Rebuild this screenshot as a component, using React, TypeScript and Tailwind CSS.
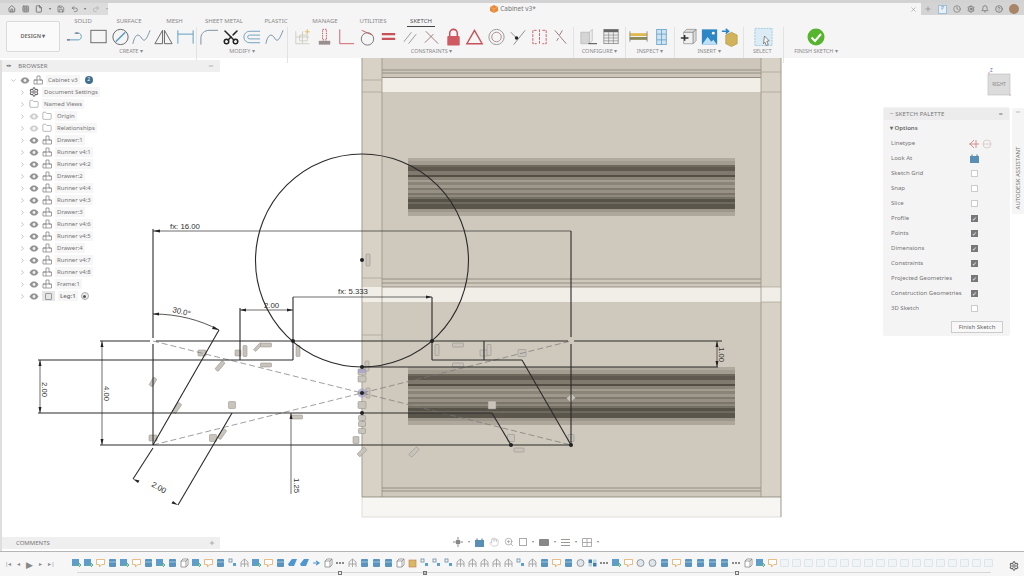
import type { ReactNode } from 'react'
import {
  Bell,
  ChevronRight,
  ChevronDown,
  CircleHelp,
  Clock,
  File,
  Folder,
  Grid3x3,
  Hand,
  Home,
  Minus,
  Plus,
  Redo2,
  Save,
  Scissors,
  Settings,
  Undo2,
  X,
  ZoomIn,
} from 'lucide-react'

const BLUE = '#5d9cc4'
const GRAY = '#777'
const RED = '#c8515a'

// ribbon icons, all drawn in a 22x20 box
const ribbonIcons: Record<string, ReactNode> = {
  line: (
    <>
      <path d="M1 13h12c4 0 4-7 0-7H9" fill="none" stroke={BLUE} strokeWidth="1" />
      <path d="M1 13h3M13 6h-3" stroke={GRAY} strokeWidth="1.2" />
    </>
  ),
  rect: <rect x="3" y="3" width="16" height="13" fill="none" stroke="#666" strokeWidth="1" />,
  circle: (
    <>
      <circle cx="11" cy="10" r="8" fill="none" stroke="#666" strokeWidth="1" />
      <path d="M6 15 16 5" stroke={BLUE} strokeWidth="1.6" />
    </>
  ),
  spline: <path d="M2 17C4 7 8 6 11 11s5 2 9-8" fill="none" stroke="#6d8fa5" strokeWidth="1" />,
  mirror: (
    <>
      <path d="M10 3 2 17h8z" fill="none" stroke="#666" strokeWidth="1" />
      <path d="M12 3v14l8 0z" fill="none" stroke="#666" strokeWidth="1" />
    </>
  ),
  dim: <path d="M3 3v14M19 3v14M3 7h16" fill="none" stroke={BLUE} strokeWidth="1" />,
  fillet: <path d="M2 18V11C2 6 6 3 11 3h9" fill="none" stroke="#7a8f9c" strokeWidth="1" />,
  offset: <path d="M20 4H9a6 6 0 0 0 0 12h11M20 8H9a2 2 0 0 0 0 4h11" fill="none" stroke="#6fa0bd" strokeWidth="1" />,
  project: (
    <>
      <path d="M4 4v13h14M8 8h8v6H8zM4 10h14M11 4v13" fill="none" stroke="#cfcfc4" strokeWidth="1" />
      <path d="M16 2v5M13.5 4.500h5" stroke="#e0c070" strokeWidth="1.2" />
    </>
  ),
  redgear: (
    <>
      <path d="M9 2h4v11H9z" fill="none" stroke={RED} strokeWidth="1" strokeDasharray="1.5 1" />
      <path d="M5 14h12v4H5z" fill="#9a8f8f" />
    </>
  ),
  coincident: <path d="M5 2v15h15" fill="none" stroke={RED} strokeWidth="0.9" />,
  tangent: (
    <>
      <circle cx="11" cy="12" r="6.500" fill="none" stroke="#777" strokeWidth="1" />
      <path d="M5 3l11 5" stroke={RED} strokeWidth="0.9" />
    </>
  ),
  equal: <path d="M4 7h14M4 12h14" stroke={RED} strokeWidth="2.2" />,
  parallel: <path d="M4 15 12 5M9 17l8-10" stroke="#999" strokeWidth="1" />,
  perp: <path d="M5 4 18 17M4 16 13 7" stroke="#a07a7a" strokeWidth="1" />,
  lock: (
    <>
      <path d="M7 9V6a4 4 0 0 1 8 0v3" fill="none" stroke={RED} strokeWidth="1.6" />
      <rect x="4.500" y="9" width="13" height="10" rx="1" fill="#cf5a62" />
    </>
  ),
  triangle: <path d="M11 3 3 17h16z" fill="none" stroke={RED} strokeWidth="1.5" />,
  concentric: (
    <>
      <circle cx="11" cy="10" r="8" fill="none" stroke="#999" strokeWidth="1" />
      <circle cx="11" cy="10" r="5" fill="none" stroke="#b08a8a" strokeWidth="1" />
    </>
  ),
  midpoint: (
    <>
      <path d="M4 5l6 6M19 3 7 18" stroke="#8a8a8a" strokeWidth="1" />
      <circle cx="10" cy="11" r="1.8" fill="#222" />
    </>
  ),
  symmetric: <path d="M8 3H4v14h4M14 3h4v14h-4M11 2v16" fill="none" stroke={RED} strokeWidth="0.9" strokeDasharray="3 1" />,
  fix: <path d="M5 3l12 14M13 3l-3 5M7 14l2-3" fill="none" stroke="#a07a7a" strokeWidth="1" />,
  configure: (
    <>
      <path d="M4 5h9v12H4z" fill="#d5d5d5" stroke="#aaa" strokeWidth="0.6" />
      <path d="M13 5l3-3v12l-3 3z" fill="#ececec" stroke="#aaa" strokeWidth="0.6" />
      <path d="M12 17h9" stroke="#444" strokeWidth="1" />
    </>
  ),
  table: (
    <>
      <rect x="3" y="2" width="15" height="15" fill="#eee" stroke="#777" strokeWidth="0.7" />
      <path d="M3 2h15v3H3z" fill="#666" />
      <path d="M3 8h15M3 11h15M3 14h15M8 5v12M13 5v12" stroke="#777" strokeWidth="0.6" />
    </>
  ),
  measure: (
    <>
      <rect x="2" y="6" width="18" height="3" fill="#e0b84f" />
      <rect x="2" y="10" width="18" height="3" fill="#8c8c5a" />
      <path d="M2 4v11M20 4v11" stroke={GRAY} strokeWidth="0.8" />
    </>
  ),
  interference: (
    <>
      <rect x="6" y="2" width="10" height="16" fill="#cfe4f2" stroke={BLUE} strokeWidth="0.8" />
      <path d="M6 7h10M6 13h10M11 2v16" stroke={BLUE} strokeWidth="0.8" />
    </>
  ),
  insertDerive: (
    <>
      <path d="M7 5h10v12H7z" fill="#f0f0f0" stroke="#888" strokeWidth="0.7" />
      <path d="M7 5l3-3h10l-3 3zM17 5l3-3v12l-3 3z" fill="#ddd" stroke="#888" strokeWidth="0.7" />
      <path d="M4 11h8M8 8v6" stroke="#333" strokeWidth="1.6" />
    </>
  ),
  canvas: (
    <>
      <rect x="3" y="2" width="16" height="16" fill="#2d87c4" />
      <path d="M3 18l6-8 4 5 2-2 4 5z" fill="#bfe0f4" />
      <circle cx="15" cy="6" r="1.500" fill="#fff" />
    </>
  ),
  mcmaster: (
    <>
      <path d="M6 8l6-3 6 3v9l-6 3-6-3z" fill="#d2b35c" stroke="#a88c3e" strokeWidth="0.6" />
      <path d="M2 4h6M6 1.500 9 4 6 6.500" fill="none" stroke="#2a86c8" strokeWidth="1.6" />
    </>
  ),
  select: (
    <>
      <rect x="2" y="1" width="18" height="18" fill="#dcecf5" stroke="#8cc0dc" strokeWidth="0.8" strokeDasharray="2 1" />
      <path d="M12 9l5 5-2.500.5L16 18l-2 1-1.500-3.500L11 17z" fill="#f7f7f7" stroke="#555" strokeWidth="0.7" />
    </>
  ),
}

const ribbonGroups = [
  { label: 'CREATE', width: 'w-[131px]', px: 'px-[0px]', icons: ['line', 'rect', 'circle', 'spline', 'mirror', 'dim'] },
  { label: 'MODIFY', width: 'w-[91px]', px: 'px-[2px]', icons: ['fillet', 'scissors', 'offset', 'spline'] },
  {
    label: 'CONSTRAINTS',
    width: 'w-[286px]',
    px: 'pl-[4px] pr-[2px]',
    icons: ['project', 'redgear', 'coincident', 'tangent', 'equal', 'parallel', 'perp', 'lock', 'triangle', 'concentric', 'midpoint', 'symmetric', 'fix'],
  },
  { label: 'CONFIGURE', width: 'w-[52px]', px: 'px-[3px]', icons: ['configure', 'table'] },
  { label: 'INSPECT', width: 'w-[49px]', px: 'px-[2px]', icons: ['measure', 'interference'] },
  { label: 'INSERT', width: 'w-[69px]', px: 'px-[2px]', icons: ['insertDerive', 'canvas', 'mcmaster'] },
  { label: 'SELECT', width: 'w-[40px]', px: 'px-[9px]', icons: ['select'] },
]

const tabs = [
  { name: 'SOLID', w: 'w-[46px]' },
  { name: 'SURFACE', w: 'w-[46px]' },
  { name: 'MESH', w: 'w-[45px]' },
  { name: 'SHEET METAL', w: 'w-[54px]' },
  { name: 'PLASTIC', w: 'w-[50px]' },
  { name: 'MANAGE', w: 'w-[48px]' },
  { name: 'UTILITIES', w: 'w-[48px]' },
  { name: 'SKETCH', w: 'w-[48px]', active: true },
]

const browserRows = [
  { name: 'Drawer:1' },
  { name: 'Runner v4:1' },
  { name: 'Runner v4:2' },
  { name: 'Drawer:2' },
  { name: 'Runner v4:4' },
  { name: 'Runner v4:3' },
  { name: 'Drawer:3' },
  { name: 'Runner v4:6' },
  { name: 'Runner v4:5' },
  { name: 'Drawer:4' },
  { name: 'Runner v4:7' },
  { name: 'Runner v4:8' },
  { name: 'Frame:1' },
]

const paletteRows = [
  { name: 'Sketch Grid', on: false },
  { name: 'Snap', on: false },
  { name: 'Slice', on: false },
  { name: 'Profile', on: true },
  { name: 'Points', on: true },
  { name: 'Dimensions', on: true },
  { name: 'Constraints', on: true },
  { name: 'Projected Geometries', on: true },
  { name: 'Construction Geometries', on: true },
  { name: '3D Sketch', on: false },
]

// stripes of a drawer handle: top, height, colour
const handleStripes: [number, number, string][] = [
  [0, 3, '#b0a99d'],
  [3, 4, '#a29b8f'],
  [7, 2, '#6d675c'],
  [9, 4, '#5f594f'],
  [13, 4, '#7f796e'],
  [17, 2, '#544e45'],
  [19, 3, '#8a8478'],
  [22, 2, '#a39c90'],
  [24, 3, '#8a8478'],
  [27, 3, '#9f988c'],
  [30, 2, '#7f796e'],
  [32, 3, '#979084'],
  [35, 2, '#7a7469'],
  [37, 2, '#8f897d'],
  [39, 2, '#757064'],
  [41, 3, '#575248'],
  [44, 2, '#6f695e'],
  [46, 5, '#5b564c'],
  [51, 3, '#9d968a'],
  [54, 4, '#aea79b'],
]

// sketch constraint glyphs: x, y, w, h, rotation
const glyphs: [number, number, number, number, number][] = [
  [368, 260, 4, 12, 0],
  [202, 353, 8, 6, 0],
  [238, 353, 6, 6, 0],
  [245, 351, 4, 11, 0],
  [258, 347, 3, 10, 45],
  [266, 345, 11, 4, 0],
  [266, 365, 11, 4, 0],
  [298, 351, 4, 11, 0],
  [153, 382, 4, 9, 30],
  [220, 366, 4, 11, 40],
  [177, 408, 4, 11, 35],
  [222, 434, 4, 11, 35],
  [232, 405, 7, 7, 0],
  [213, 438, 7, 7, 0],
  [153, 438, 8, 6, 0],
  [297, 417, 11, 4, 0],
  [362, 372, 8, 6, 0],
  [362, 379, 8, 6, 0],
  [367, 366, 4, 10, 0],
  [368, 393, 4, 10, 0],
  [362, 405, 8, 7, 0],
  [362, 418, 7, 5, 0],
  [362, 424, 7, 5, 0],
  [362, 431, 7, 5, 0],
  [356, 440, 6, 7, 0],
  [362, 452, 4, 10, 45],
  [414, 452, 4, 11, 45],
  [458, 345, 11, 4, 0],
  [437, 350, 4, 11, 0],
  [484, 353, 8, 6, 0],
  [489, 350, 4, 11, 0],
  [522, 353, 8, 7, 0],
  [458, 365, 11, 4, 0],
  [492, 405, 8, 8, 0],
  [511, 438, 7, 7, 0],
  [519, 450, 10, 4, 0],
  [571, 398, 6, 7, 45],
  [571, 438, 6, 7, 0],
]

const lines: [number, number, number, number][] = [
  [100, 341, 150, 341],
  [156, 341, 568, 341],
  [574, 341, 722, 341],
  [100, 445, 571, 445],
  [38, 360, 293, 360],
  [432, 360, 522, 360],
  [38, 413, 492, 413],
  [362, 367, 718, 367],
  [153, 229, 153, 338],
  [153, 344, 153, 445],
  [571, 231, 571, 337],
  [571, 344, 571, 445],
  [153, 445, 219, 330],
  [232, 413, 178, 505],
  [153, 448, 133, 479],
  [293, 297, 293, 360],
  [432, 297, 432, 360],
  [484, 341, 484, 360],
  [240, 308, 240, 360],
  [522, 360, 571, 445],
  [492, 413, 511, 445],
]

// timeline icon kinds, left to right
const timeline =
  'mmsbmsbmbcmsbjrmsbBBacdrbbbcojjjrrrrrjrbsbgpdmsggbsbbbbdcms'.split('')
const fadedCount = 18

function Eye({ faded }: { faded?: boolean }) {
  return (
    <svg width="10" height="7" viewBox="0 0 10 7" className={faded ? 'opacity-30' : 'opacity-70'}>
      <path d="M.5 3.500C2 1 3.500.5 5 .5s3 .5 4.500 3C8 6 6.500 6.500 5 6.500S2 6 .5 3.500z" fill="#666" />
      <circle cx="5" cy="3.500" r="1.400" fill="#eee" />
    </svg>
  )
}

function ComponentIcon() {
  return (
    <svg width="10" height="10" viewBox="0 0 10 10">
      <path d="M1 9V5h3V1h3v4h2.500v4z M1 5h8 M4 5v4" fill="none" stroke="#888" strokeWidth="0.8" />
    </svg>
  )
}

function TreeRow({ indent, chevron = 'right', children }: { indent: string; chevron?: 'right' | 'down'; children: ReactNode }) {
  return (
    <div className={`flex h-[12px] items-center gap-[3px] ${indent}`}>
      {chevron === 'down' ? (
        <ChevronDown size={7} strokeWidth={1.5} className="text-[#777]" />
      ) : (
        <ChevronRight size={7} strokeWidth={1.5} className="text-[#777]" />
      )}
      {children}
    </div>
  )
}

function RowLabel({ children, bold }: { children: ReactNode; bold?: boolean }) {
  return <span className={`bg-[#f6f6f6] px-[2px] text-[6px] leading-[10px] text-[#757575] ${bold ? 'font-semibold' : ''}`}>{children}</span>
}

function BrowserPanel() {
  return (
    <div className="absolute left-[2px] top-[2px] w-[218px]">
      <div className="flex h-[12px] items-center justify-between bg-[#efefef] px-[4px] text-[6px] tracking-wide text-[#777]">
        <span className="flex items-center gap-[6px]">
          <span className="text-[5px]">◂▸</span>
          BROWSER
        </span>
        <Minus size={6} className="mr-[2px]" />
      </div>
      <div className="mt-[2px]">
        <TreeRow indent="pl-[8px]" chevron="down">
          <Eye />
          <ComponentIcon />
          <RowLabel>Cabinet v3</RowLabel>
          <span className="ml-[2px] flex h-[8px] w-[8px] items-center justify-center rounded-full bg-[#3f6f8f] text-[5px] text-white">2</span>
        </TreeRow>
        <TreeRow indent="pl-[17px]">
          <Settings size={10} strokeWidth={2.5} className="text-[#666]" />
          <RowLabel>Document Settings</RowLabel>
        </TreeRow>
        <TreeRow indent="pl-[17px]">
          <Folder size={10} strokeWidth={1.2} className="text-[#777]" />
          <RowLabel>Named Views</RowLabel>
        </TreeRow>
        {['Origin', 'Relationships'].map((name) => (
          <TreeRow key={name} indent="pl-[17px]">
            <Eye faded />
            <Folder size={10} strokeWidth={1.2} className="text-[#777]" />
            <RowLabel>{name}</RowLabel>
          </TreeRow>
        ))}
        {browserRows.map((row) => (
          <TreeRow key={row.name} indent="pl-[17px]">
            <Eye />
            <ComponentIcon />
            <RowLabel>{row.name}</RowLabel>
          </TreeRow>
        ))}
        <TreeRow indent="pl-[17px]">
          <Eye />
          <span className="flex h-[10px] w-[13px] items-center justify-center bg-[#e6e6e6]">
            <span className="h-[7px] w-[7px] rounded-[1px] border border-[#999]" />
          </span>
          <RowLabel bold>Leg:1</RowLabel>
          <span className="flex h-[8px] w-[8px] items-center justify-center rounded-full border border-[#aaa] bg-[#eee]">
            <span className="h-[3px] w-[3px] rounded-full bg-[#555]" />
          </span>
        </TreeRow>
      </div>
    </div>
  )
}

function SketchPalette() {
  return (
    <div className="absolute right-[15px] top-[50px] w-[125px] bg-[#f4f4f4] pb-[2px] shadow-[0_0_1px_#bbb]">
      <div className="flex h-[12px] items-center justify-between bg-[#ececec] px-[6px] text-[6px] tracking-wide text-[#777]">
        <span>− SKETCH PALETTE</span>
        <span className="text-[7px]">=</span>
      </div>
      <div className="flex h-[16px] items-center pl-[6px] text-[6px] font-semibold text-[#666]">▾ Options</div>
      <div className="text-[6px] text-[#757575]">
        <div className="flex h-[15px] items-center justify-between pl-[7px] pr-[17px]">
          <span>Linetype</span>
          <svg width="24" height="10" viewBox="0 0 24 10">
            <path d="M1 5h10M6 1 2 5l4 4M8 1v8" fill="none" stroke="#cf7a7a" strokeWidth="0.8" />
            <circle cx="19" cy="5" r="4" fill="none" stroke="#d8c4c4" strokeWidth="0.8" />
            <path d="M15 5h8" stroke="#d8c4c4" strokeWidth="0.8" />
          </svg>
        </div>
        <div className="flex h-[15px] items-center justify-between pl-[7px] pr-[30px]">
          <span>Look At</span>
          <svg width="9" height="9" viewBox="0 0 9 9">
            <rect y="2" width="9" height="7" fill="#5a8fb5" />
            <path d="M2 2V.5M7 2V.5" stroke="#3f6f8f" />
          </svg>
        </div>
        {paletteRows.map((row) => (
          <div key={row.name} className="flex h-[15px] items-center justify-between pl-[7px] pr-[31px]">
            <span>{row.name}</span>
            {row.on ? (
              <span className="flex h-[7px] w-[7px] items-center justify-center bg-[#777] text-[6px] leading-none text-white">✓</span>
            ) : (
              <span className="h-[7px] w-[7px] border border-[#ccc] bg-white" />
            )}
          </div>
        ))}
      </div>
      <div className="flex justify-end pr-[6px] pt-[5px]">
        <div className="flex h-[12px] w-[52px] items-center justify-center border border-[#ccc] bg-[#f8f8f8] text-[6px] text-[#666]">Finish Sketch</div>
      </div>
    </div>
  )
}

function Drawing() {
  return (
    <svg className="absolute inset-0" width="1024" height="493" viewBox="0 58 1024 493">
      {/* cabinet seen from the right */}
      <rect x="362" y="58" width="419" height="459" fill="#f8f6f3" stroke="#cfcac2" strokeWidth="0.6" />
      <rect x="362" y="58" width="419" height="439" fill="#d8d1c5" />
      <rect x="382" y="58" width="379" height="20" fill="#cec6ba" />
      <rect x="382" y="78" width="379" height="14" fill="#f1eee8" />
      <path d="M382 70h379M382 73h379M382 77.500h379" stroke="#7d776c" strokeWidth="0.7" />
      <rect x="382" y="92" width="379" height="195" fill="#cfc8bc" />
      <rect x="362" y="287" width="419" height="15" fill="#f1eee8" />
      <path d="M382 279h379M382 283h379M382 287h379" stroke="#7d776c" strokeWidth="0.7" />
      <rect x="382" y="302" width="379" height="195" fill="#cfc8bc" />
      <path d="M382 488h379M382 491h379M362 497h419" stroke="#7d776c" strokeWidth="0.7" />
      <path d="M362 58v439M382 58v439M761 58v439M781 58v459" stroke="#8f897e" strokeWidth="0.7" />
      <path d="M362 80h20M362 92h20M362 278h20M362 335h20M761 72h20M761 92h20M761 287h20M761 302h20" stroke="#a09a8e" strokeWidth="0.6" />
      {[158, 367].map((top) =>
        handleStripes.map(([y, h, color]) => <rect key={`${top}-${y}`} x="408" y={top + y} width="327" height={h} fill={color} />),
      )}

      {/* constraint glyphs */}
      {glyphs.map(([x, y, w, h, r], i) => (
        <rect
          key={i}
          x={x - w / 2}
          y={y - h / 2}
          width={w}
          height={h}
          rx="0.8"
          fill="#c8c4bc"
          stroke="#8f8b83"
          strokeWidth="0.5"
          transform={`rotate(${r} ${x} ${y})`}
        />
      ))}
      <circle cx="362" cy="393" r="4.500" fill="#a49cc8" opacity="0.7" />
      <rect x="358" y="369" width="8" height="4" fill="#a49cc8" opacity="0.7" />

      {/* construction lines */}
      <path d="M153 341 571 445M153 445 571 341" stroke="#777" strokeWidth="0.7" strokeDasharray="6 3" fill="none" />

      {/* sketch lines */}
      <g stroke="#2a2a2a" strokeWidth="1.1" fill="none">
        {lines.map(([x1, y1, x2, y2], i) => (
          <line key={i} x1={x1} y1={y1} x2={x2} y2={y2} />
        ))}
        <circle cx="362" cy="260.500" r="106.500" />
        <path d="M153 314C178 314 200 320 219 330" strokeWidth="0.8" />
      </g>

      {/* dimension lines */}
      <g stroke="#2f2f2f" strokeWidth="0.7" fill="none">
        <path d="M153 231h418M293 297h139M240 310h53M102 341v104M40 360v53M291 413v81M717 341v26" />
      </g>
      <g fill="#222">
        <path d="M153 231l7-1.500v3zM293 297m139 0l-6-1.500v3zM240 310l6-1.500v3zM293 310l-6-1.500v3z" />
        <path d="M102 341l-1.500 6h3zM102 445l-1.500-6h3zM40 360l-1.500 6h3zM40 413l-1.500-6h3zM291 413l-1.500 6h3zM717 341l-1.500 6h3zM717 367l-1.500-6h3z" />
        <path d="M153 314l6-1.500v3zM219 330l-7-1 1.500-3zM133 479l6.500 1.500-1.500 2.600zM178 505l-6.500-1.500 1.500-2.600z" />
        {[
          [293, 341],
          [362, 260],
          [362, 367],
          [362, 393],
          [362, 413],
          [432, 341],
          [511, 445],
          [571, 445],
        ].map(([x, y]) => (
          <circle key={`${x}-${y}`} cx={x} cy={y} r="2" />
        ))}
      </g>
      <g fill="#2f2f2f" fontFamily="'Liberation Sans', sans-serif" fontSize="7.800">
        <text x="170" y="229">fx: 16.00</text>
        <text x="338" y="294">fx: 5.333</text>
        <text x="264" y="308">2.00</text>
        <text x="172" y="312" transform="rotate(14 172 312)">30.0°</text>
        <text x="42" y="382" transform="rotate(90 42 382)">2.00</text>
        <text x="104" y="386" transform="rotate(90 104 386)">4.00</text>
        <text x="294" y="478" transform="rotate(90 294 478)">1.25</text>
        <text x="719" y="347" transform="rotate(90 719 347)">1.00</text>
        <text x="151" y="486" transform="rotate(30 151 486)">2.00</text>
      </g>

      {/* view cube */}
      <g>
        <path d="M989 72v2M1009 95h2" stroke="#c66" strokeWidth="0.6" />
        <rect x="988" y="74" width="22" height="21" fill="#dcdcdc" stroke="#bbb" strokeWidth="0.6" />
        <text x="999" y="86" textAnchor="middle" fontSize="4.500" fill="#888" fontFamily="'Noto Sans', sans-serif">RIGHT</text>
        <text x="990" y="72" fontSize="4.500" fill="#6a6ab0" fontFamily="'Noto Sans', sans-serif">Z</text>
      </g>
    </svg>
  )
}

function NavBar() {
  return (
    <div className="absolute bottom-[3px] left-[453px] flex h-[12px] items-center gap-[5px]">
      <svg width="10" height="10" viewBox="0 0 10 10">
        <circle cx="5" cy="5" r="2.500" fill="#888" />
        <path d="M5 0v2M5 8v2M0 5h2M8 5h2" stroke="#888" />
      </svg>
      <span className="text-[4px] text-[#888]">▾</span>
      <svg width="9" height="9" viewBox="0 0 9 9">
        <rect y="2" width="9" height="7" fill="#5a8fb5" />
        <path d="M2 2V.5M7 2V.5" stroke="#3f6f8f" />
      </svg>
      <Hand size={10} strokeWidth={1.2} className="text-[#aaa]" />
      <ZoomIn size={10} strokeWidth={1.2} className="text-[#777]" />
      <span className="h-[8px] w-[8px] border border-[#aaa]" />
      <span className="text-[4px] text-[#888]">▾</span>
      <span className="h-[7px] w-[10px] rounded-[1px] bg-[#888]" />
      <span className="text-[4px] text-[#888]">▾</span>
      <svg width="9" height="9" viewBox="0 0 9 9">
        <path d="M0 1.500h9M0 4.500h9M0 7.500h9" stroke="#999" />
      </svg>
      <span className="text-[4px] text-[#888]">▾</span>
      <svg width="10" height="9" viewBox="0 0 10 9">
        <path d="M.5.5h9v8h-9zM.5 4.500h9M5 .5v8" fill="none" stroke="#999" strokeWidth="0.8" />
      </svg>
      <span className="text-[4px] text-[#888]">▾</span>
    </div>
  )
}

function TimelineIcon({ kind }: { kind: string }) {
  switch (kind) {
    case 'm':
      return (
        <svg width="9" height="10" viewBox="0 0 9 10">
          <rect y="1" width="7" height="7" fill="#5d9ccc" />
          <path d="M3 7h6M7 5l2 2-2 2" fill="none" stroke="#5cb588" strokeWidth="1" />
        </svg>
      )
    case 's':
      return (
        <svg width="9" height="10" viewBox="0 0 9 10">
          <path d="M.5 1.500h8v5h-3l-2 2.500v-2.500h-3z" fill="#fff" stroke="#e0a050" strokeWidth="0.7" />
        </svg>
      )
    case 'b':
      return (
        <svg width="9" height="10" viewBox="0 0 9 10">
          <rect x="1" y="1" width="7" height="8" rx="1" fill="#5a93bd" />
          <path d="M1 4h7" stroke="#a8d0ea" strokeWidth="0.8" />
        </svg>
      )
    case 'B':
      return (
        <svg width="9" height="10" viewBox="0 0 9 10">
          <path d="M0 6 4 1h5L6 8H1z" fill="#4f97d0" />
        </svg>
      )
    case 'c':
      return (
        <svg width="9" height="10" viewBox="0 0 9 10">
          <path d="M1 3h5v6H1zM1 3l2-2h5v6L6 9M6 3l2-2" fill="#fff" stroke="#888" strokeWidth="0.8" />
        </svg>
      )
    case 'j':
      return (
        <svg width="9" height="10" viewBox="0 0 9 10">
          <rect x="1" y="1" width="3" height="3" fill="none" stroke="#6a8ca8" strokeWidth="0.8" />
          <rect x="5" y="5" width="3" height="3" fill="#5a9fd0" />
        </svg>
      )
    case 'r':
      return (
        <svg width="9" height="10" viewBox="0 0 9 10">
          <path d="M1 9V4l3.500-3L8 4v5M1 6h7M4.500 1v8" fill="none" stroke="#999" strokeWidth="0.8" />
        </svg>
      )
    case 'a':
      return (
        <svg width="9" height="10" viewBox="0 0 9 10">
          <path d="M1 5h5M4 3l3 2-3 2" fill="none" stroke="#4f97d0" strokeWidth="1.200" />
        </svg>
      )
    case 'd':
      return (
        <svg width="9" height="10" viewBox="0 0 9 10">
          <path d="M0 5h9" stroke="#666" strokeWidth="1.500" strokeDasharray="2 1" />
        </svg>
      )
    case 'o':
      return (
        <svg width="9" height="10" viewBox="0 0 9 10">
          <rect x="1" y="2" width="7" height="7" fill="#d8b868" stroke="#c47a4a" strokeWidth="0.6" />
        </svg>
      )
    case 'g':
      return (
        <svg width="9" height="10" viewBox="0 0 9 10">
          <circle cx="4.500" cy="5" r="3.500" fill="#dde6ec" stroke="#888" strokeWidth="0.8" />
        </svg>
      )
    case 'p':
      return (
        <svg width="9" height="10" viewBox="0 0 9 10">
          <path d="M.5 1.500h3.500v3.500H.5z" fill="#3f7fb0" />
          <path d="M5 5h3.500v3.500H5z" fill="#3f7fb0" />
          <path d="M5 1.500h3.500v3.500H5zM.5 5H4v3.500H.5z" fill="#bcd4e4" />
        </svg>
      )
    default:
      return <span className="h-[10px] w-[9px]" />
  }
}

function Timeline() {
  return (
    <div className="relative flex h-[25px] items-center border-t border-[#b5b5b5] bg-[#f6f6f6]">
      <div className="flex w-[72px] items-center gap-[6px] pl-[5px] text-[#888]">
        <span className="text-[6px] leading-none">|◂</span>
        <span className="text-[6px] leading-none">◂</span>
        <span className="text-[9px] leading-none">▶</span>
        <span className="text-[6px] leading-none">▸</span>
        <span className="text-[6px] leading-none">▸|</span>
      </div>
      <div className="flex items-center gap-[3px] pb-[2px]">
        {timeline.map((kind, i) => (
          <TimelineIcon key={i} kind={kind} />
        ))}
        {Array.from({ length: fadedCount }).map((_, i) => (
          <span key={i} className="h-[8px] w-[9px] rounded-[1px] border border-[#dbe5ec] bg-[#f0f4f7]" />
        ))}
      </div>
      <div className="absolute bottom-[3px] left-[77px] h-px w-[914px] bg-[#d6d6d6]" />
      <span className="absolute bottom-[1px] left-[338px] h-[4px] w-[4px] border border-[#777] bg-[#eee]" />
      <span className="absolute bottom-[1px] left-[423px] h-[4px] w-[4px] border border-[#777] bg-[#bbb]" />
      <span className="absolute bottom-[1px] left-[735px] h-[4px] w-[4px] border border-[#777] bg-[#eee]" />
      <Settings size={10} strokeWidth={2.5} className="absolute right-[5px] top-[9px] text-[#666]" />
    </div>
  )
}

export default function App() {
  return (
    <div className="flex h-[576px] w-[1024px] flex-col overflow-hidden bg-white font-['Noto_Sans',sans-serif]">
      {/* title bar */}
      <div className="flex h-[15px] items-center border-t-[3px] border-[#d2d2d2] bg-[#f5f5f5]">
        <div className="flex h-full w-[108px] items-center gap-[6px] bg-[#dcdcdc] pl-[8px] text-[#666]">
          <Home size={8} strokeWidth={2.5} />
          <Grid3x3 size={8} strokeWidth={2} />
          <File size={8} strokeWidth={2.5} />
          <span className="text-[4px]">▾</span>
          <Save size={8} strokeWidth={2} />
          <Undo2 size={8} strokeWidth={2} />
          <span className="text-[4px]">▾</span>
          <Redo2 size={8} strokeWidth={2} className="text-[#aaa]" />
          <span className="text-[4px] text-[#aaa]">▾</span>
        </div>
        <div className="flex flex-1 items-center justify-center gap-[2px] pl-[8px] text-[6.5px] text-[#777]">
          <svg width="8" height="8" viewBox="0 0 8 8">
            <path d="M4 0 8 2v4L4 8 0 6V2z" fill="#e88a3a" />
            <path d="M4 4 8 2M4 4v4M4 4 0 2" stroke="#f6c08a" strokeWidth="0.5" />
          </svg>
          Cabinet v3*
        </div>
        <X size={7} strokeWidth={1.5} className="mr-[4px] text-[#777]" />
        <div className="flex h-full w-[103px] items-center gap-[6px] bg-[#d4d4d4] pl-[3px] text-[#777]">
          <Plus size={8} strokeWidth={1.5} />
          <span className="flex h-[9px] w-[9px] items-center justify-center border border-[#9cc0da] bg-[#e8f0f6] text-[5px] text-[#6f98b8]">P</span>
          <Clock size={8} strokeWidth={2} />
          <Settings size={8} strokeWidth={3} />
          <Bell size={8} strokeWidth={2.5} />
          <CircleHelp size={8} strokeWidth={2.5} />
          <span className="h-[10px] w-[10px] rounded-full bg-[#a88468]" />
        </div>
      </div>

      {/* ribbon */}
      <div className="flex h-[43px] bg-[#f5f5f5]">
        <div className="w-[60px] shrink-0 pl-[6px] pt-[6px]">
          <div className="flex h-[31px] w-[54px] items-center justify-center rounded-[2px] border border-[#dadada] bg-[#fafafa] text-[5.5px] font-semibold text-[#666]">
            DESIGN ▾
          </div>
        </div>
        <div className="flex flex-col">
          <div className="flex h-[12px] items-start">
            {tabs.map((tab) => (
              <div key={tab.name} className={`flex ${tab.w} justify-center pt-[2px] text-[6px] leading-[8px] text-[#8a8a8a]`}>
                <span className={tab.active ? 'border-b border-[#444] px-[3px] pb-[1px] text-[#555]' : ''}>{tab.name}</span>
              </div>
            ))}
          </div>
          <div className="flex pl-[6px]">
            {ribbonGroups.map((group) => (
              <div key={group.label} className={`flex ${group.width} flex-col items-center border-r border-[#e2e2e2] ${group.px}`}>
                <div className="flex h-[20px] w-full items-center justify-between">
                  {group.icons.map((name, i) =>
                    name === 'scissors' ? (
                      <Scissors key={i} size={18} strokeWidth={2} className="-rotate-90 text-[#222]" />
                    ) : (
                      <svg key={i} width="21" height="20" viewBox="0 0 22 20">
                        {ribbonIcons[name]}
                      </svg>
                    ),
                  )}
                </div>
                <span className="text-[5.5px] leading-[8px] text-[#8a8a8a]">{group.label} ▾</span>
              </div>
            ))}
            <div className="flex w-[64px] flex-col items-center">
              <svg width="20" height="20" viewBox="0 0 20 20">
                <circle cx="10" cy="10" r="8.500" fill="#56b42e" />
                <path d="M5.500 10.500 9 14l6-7" fill="none" stroke="#fff" strokeWidth="2" />
              </svg>
              <span className="whitespace-nowrap text-[5.500px] leading-[8px] text-[#8a8a8a]">FINISH SKETCH ▾</span>
            </div>
          </div>
        </div>
      </div>

      {/* canvas */}
      <div className="relative flex-1">
        <Drawing />
        <div className="absolute bottom-0 left-0 top-[2px] w-[2px] bg-[#dedede]" />
        <BrowserPanel />
        <SketchPalette />
        <div className="absolute right-0 top-[50px] flex h-[106px] w-[12px] flex-col items-center bg-[#f5f5f5] pt-[1px] text-[#888]">
          <Minus size={6} />
          <span className="mt-[59px] -rotate-90 whitespace-nowrap text-[6px] leading-[8px] text-[#777]">AUTODESK ASSISTANT</span>
        </div>
        <div className="absolute bottom-[2px] left-[2px] flex h-[12px] w-[218px] items-center justify-between bg-[#efefef] pl-[14px] pr-[5px] text-[6px] text-[#777]">
          COMMENTS
          <Plus size={6} />
        </div>
        <NavBar />
      </div>

      <Timeline />
    </div>
  )
}
